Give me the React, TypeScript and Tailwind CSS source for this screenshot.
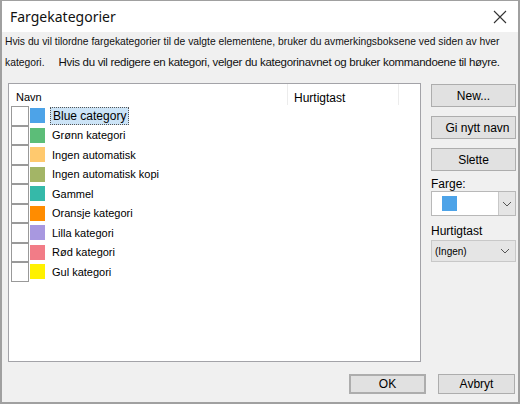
import React from 'react';

const categories = [
  { name: 'Blue category', color: 'bg-[#4da3e8]', selected: true },
  { name: 'Grønn kategori', color: 'bg-[#5cbd78]' },
  { name: 'Ingen automatisk', color: 'bg-[#ffc96e]' },
  { name: 'Ingen automatisk kopi', color: 'bg-[#a3b566]' },
  { name: 'Gammel', color: 'bg-[#35b9a9]' },
  { name: 'Oransje kategori', color: 'bg-[#ff8c00]' },
  { name: 'Lilla kategori', color: 'bg-[#a898e0]' },
  { name: 'Rød kategori', color: 'bg-[#f27c87]' },
  { name: 'Gul kategori', color: 'bg-[#fff100]' },
];

function Chevron() {
  return (
    <svg width="10" height="6" viewBox="0 0 10 6" className="text-[#555]">
      <path d="M1 1 L5 5 L9 1" fill="none" stroke="currentColor" strokeWidth="1" />
    </svg>
  );
}

function Btn({ label, className = '' }: { label: string; className?: string }) {
  return (
    <div className={`flex items-center justify-center bg-[#e1e1e1] border border-[#adadad] text-[12px] text-black ${className}`}>
      {label}
    </div>
  );
}

export default function App() {
  return (
    <div className="w-[520px] h-[404px] flex flex-col bg-[#f0f0f0] border-t border-x-2 border-b-2 border-[#a0a0a0] font-['Liberation_Sans',Arial,sans-serif] text-black overflow-hidden">
      {/* title bar */}
      <div className="h-[31px] bg-white flex items-center justify-between pl-[8px] pr-[11px] shrink-0">
        <span className="text-[14px] font-['Noto_Sans',sans-serif] text-[#111]">Fargekategorier</span>
        <svg width="14" height="14" viewBox="0 0 14 14">
          <path d="M1 1 L13 13 M13 1 L1 13" stroke="#333" strokeWidth="1.1" />
        </svg>
      </div>

      {/* description */}
      <div className="pl-[3px] text-[10.3px] leading-[20px] text-[#111] h-[51px] shrink-0 whitespace-nowrap">
        <div>Hvis du vil tilordne fargekategorier til de valgte elementene, bruker du avmerkingsboksene ved siden av hver</div>
        <div>
          kategori.<span className="ml-[14px] text-[11.5px] tracking-[-0.3px]">Hvis du vil redigere en kategori, velger du kategorinavnet og bruker kommandoene til høyre.</span>
        </div>
      </div>

      {/* main */}
      <div className="flex pl-[6px] gap-[10px]">
        <div className="w-[413px] h-[279px] bg-white border border-[#a3a3a8] flex flex-col">
          <div className="flex h-[21px] items-center text-[11px] shrink-0">
            <div className="w-[278px] pl-[7px] pt-[6px]">Navn</div>
            <div className="w-[1px] h-full bg-[#ececec]" />
            <div className="w-[110px] pl-[6px] pt-[6px] text-[12px]">Hurtigtast</div>
            <div className="w-[1px] h-full bg-[#ececec]" />
          </div>
          <div className="flex flex-col pl-[2px] pt-[1px]">
            {categories.map((c) => (
              <div key={c.name} className="flex items-center h-[19.5px]">
                <div className="w-[18px] h-[19.5px] border border-[#999] bg-white" />
                <div className={`w-[15px] h-[15px] ml-[1px] ${c.color}`} />
                {c.selected ? (
                  <div className="ml-[5px] h-[18px] px-[2px] flex items-center bg-[#cce4f7] border border-dotted border-[#555] text-[12px]">
                    {c.name}
                  </div>
                ) : (
                  <div className="ml-[7px] text-[11px]">{c.name}</div>
                )}
              </div>
            ))}
          </div>
        </div>

        <div className="w-[85px] flex flex-col pt-[1px]">
          <Btn label="New..." className="h-[23px]" />
          <Btn label="Gi nytt navn" className="h-[23px] mt-[9px] pl-[8px] text-[11px]" />
          <Btn label="Slette" className="h-[23px] mt-[9px]" />
          <div className="text-[12px] mt-[6px] leading-[14px]">Farge:</div>
          <div className="h-[25px] flex bg-white border border-[#b8b8b8] w-[85px]">
            <div className="flex-1 flex items-center pl-[10px]">
              <div className="w-[15px] h-[15px] bg-[#4da3e8]" />
            </div>
            <div className="w-[17px] flex items-center justify-center bg-[#e5e5e5] border-l border-[#c8c8c8]">
              <Chevron />
            </div>
          </div>
          <div className="text-[12px] mt-[8px] leading-[14px]">Hurtigtast</div>
          <div className="mt-[2px] h-[22px] flex items-center justify-between bg-[#e5e5e5] border border-[#c8c8c8] pl-[3px] pr-[5px]">
            <span className="text-[10px]">(Ingen)</span>
            <Chevron />
          </div>
        </div>
      </div>

      {/* footer */}
      <div className="flex justify-end gap-[12px] pr-[3px] mt-[12px]">
        <Btn label="OK" className="w-[77px] h-[20px] border-2 border-[#0078d7]" />
        <Btn label="Avbryt" className="w-[77px] h-[20px]" />
      </div>
    </div>
  );
}
